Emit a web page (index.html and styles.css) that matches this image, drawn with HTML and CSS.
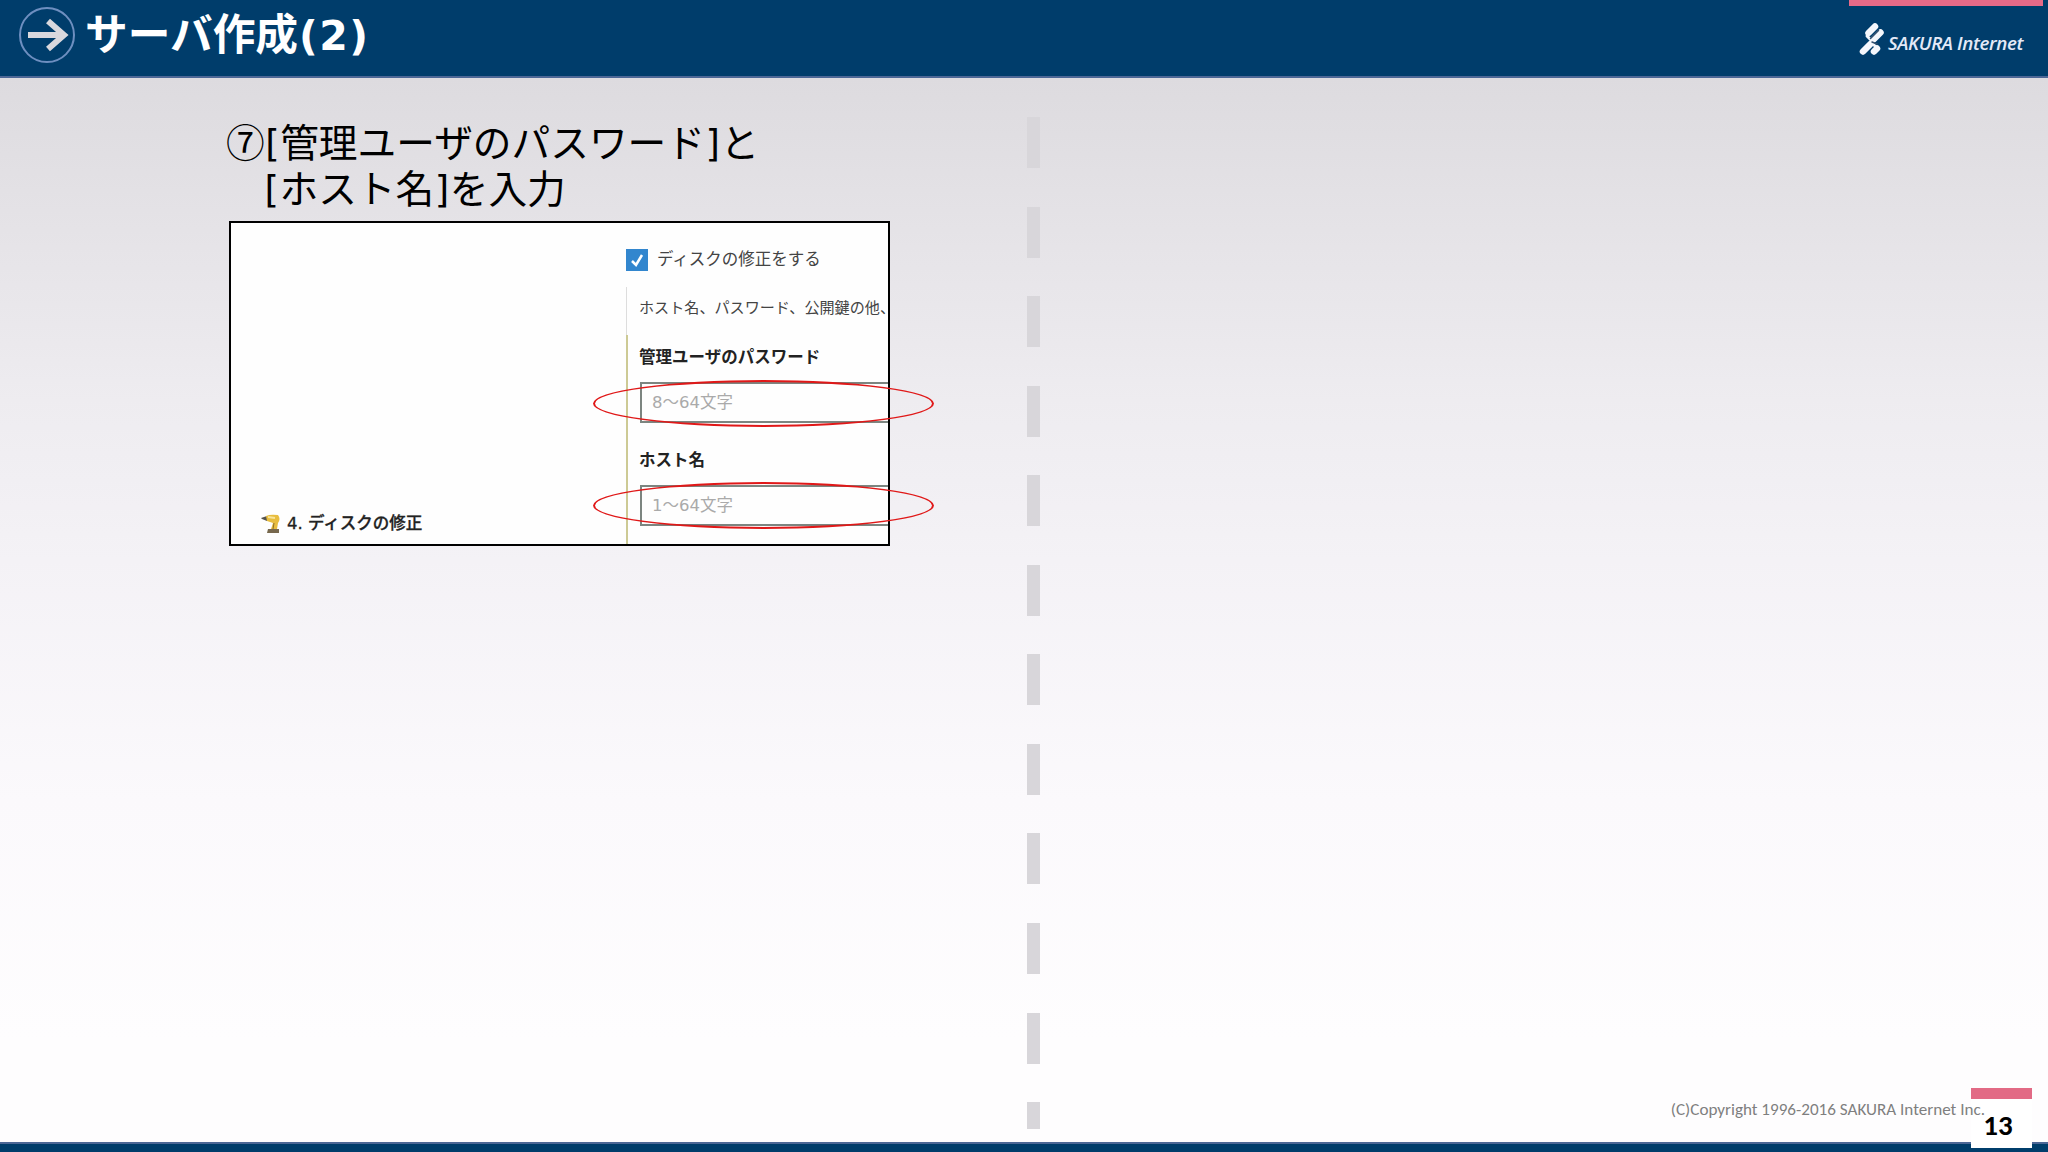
FILE: index.html
```html
<!DOCTYPE html>
<html lang="ja">

<head>
    <meta charset="UTF-8">
    <meta name="viewport" content="width=device-width, initial-scale=1.0">
    <title>サーバ作成(2)</title>
    <link rel="stylesheet" href="styles.css">
</head>

<body>
    <div class="slide">
        <header class="header">
            <svg class="icon-arrow" viewBox="0 0 58 58">
                <circle cx="29" cy="29" r="27" />
                <path d="M10 29H46M30 15L46 29L30 43" />
            </svg>
            <h1>サーバ作成<span class="num">(2)</span></h1>
            <div class="brand">
                <div class="brand-bar"></div>
                <div class="logo">
                    <svg class="logo-mark" viewBox="0 0 26 34">
                        <path class="leaf" d="M9.5 11L16 4.5M14.5 17.5L21.5 10.5M4 29.5L11.5 22M15 29.5L18 26.5" />
                        <path class="leaf-thin" d="M8 14L14 20M13 21L17 25" />
                        <path class="vein" d="M11.5 16.5L19.5 8.5M13 20L18 22" />
                    </svg>
                    <span class="logo-text">SAKURA Internet</span>
                </div>
            </div>
        </header>

        <main class="content">
            <section class="step">
                <h2>⑦<span class="bracket">[</span>管理ユーザのパスワード<span class="bracket">]</span>と<br>
                    <span class="indent"><span class="bracket">[</span>ホスト名<span class="bracket">]</span>を入力</span></h2>
                <div class="capture">
                    <div class="capture-side">
                        <svg class="icon-drill" viewBox="0 0 20 20">
                            <path d="M0 4L6 2V7L1 5Z" fill="#55534c" />
                            <path d="M5 2Q9 0 17 1Q20 5 17 9L16 15H10L12 9L6 7Z" fill="#e8bd3e" />
                            <path d="M7 3L14 4" stroke="#f8e49a" stroke-width="2" />
                            <path d="M7 15H18V19H6Z" fill="#77684d" />
                            <path d="M13 9L12 15" stroke="#8b6c2b" />
                        </svg>
                        <span>4. ディスクの修正</span>
                    </div>
                    <div class="capture-main">
                        <div class="check">
                            <svg class="checkbox" viewBox="0 0 22 22">
                                <rect width="22" height="22" />
                                <path d="M6 12L10 16L16 6" />
                            </svg>
                            <span>ディスクの修正をする</span>
                        </div>
                        <div class="fields">
                            <p class="note">ホスト名、パスワード、公開鍵の他、</p>
                            <div class="group">
                                <div class="label">管理ユーザのパスワード</div>
                                <div class="field">8～64文字</div>
                                <div class="label">ホスト名</div>
                                <div class="field">1～64文字</div>
                            </div>
                        </div>
                    </div>
                    <!-- 入力欄を囲む赤い丸 -->
                    <div class="mark mark-password"></div>
                    <div class="mark mark-host"></div>
                </div>
            </section>
            <div class="divider"></div>
            <section class="blank"></section>
        </main>

        <footer class="footer">
            <span class="copyright">(C)Copyright 1996-2016 SAKURA Internet Inc.</span>
            <div class="page">13</div>
        </footer>
    </div>
</body>

</html>
```
FILE: styles.css
```css
* {
    box-sizing: border-box;
}

body,
h1,
h2,
p {
    margin: 0;
}

body {
    font-family: "DejaVu Sans", "Noto Sans CJK JP", sans-serif;
    color: #000;
}

.slide {
    display: flex;
    flex-direction: column;
    width: 2048px;
    height: 1152px;
    overflow: hidden;
    background: linear-gradient(#dddbdf 78px, #e4e2e6 210px, #eeecf0 400px, #f4f2f6 560px, #fbf9fc 800px, #fefdfe 1040px);
}

/* ヘッダー */
.header {
    display: flex;
    flex: none;
    height: 78px;
    padding-left: 18px;
    background: #003d6b;
    border-bottom: 2px solid #4c6796;
}

.icon-arrow {
    width: 58px;
    height: 58px;
    margin-top: 6px;
    fill: none;
    stroke: #d9d8dd;
    stroke-width: 6;
}

.icon-arrow circle {
    stroke: #6e8fc0;
    stroke-width: 2;
}

h1 {
    margin-left: 9px;
    color: #fff;
    font-family: "Noto Sans CJK JP", sans-serif;
    font-size: 42.7px;
    font-weight: bold;
    line-height: 62px;
    white-space: nowrap;
}

.num {
    margin-left: 1px;
    font-family: "DejaVu Sans", sans-serif;
    font-size: 41px;
    letter-spacing: 1.5px;
}

.brand {
    width: 194px;
    margin-left: auto;
    margin-right: 5px;
}

.brand-bar {
    height: 6px;
    background: #e66a88;
}

.logo {
    display: flex;
    padding: 16px 0 0 10px;
}

.logo-mark {
    width: 26px;
    height: 34px;
    fill: none;
    stroke-linecap: round;
}

.leaf {
    stroke: #f5f7fc;
    stroke-width: 6.5;
}

.leaf-thin {
    stroke: #f5f7fc;
    stroke-width: 3;
}

.vein {
    stroke: #33506f;
    stroke-width: 1.5;
}

.logo-text {
    margin-left: 3px;
    color: #e4eaf8;
    font: italic 600 18.8px/43px "Open Sans", sans-serif;
    letter-spacing: -0.4px;
    white-space: nowrap;
}

/* 本文 */
.content {
    display: flex;
    flex: 1;
    min-height: 0;
}

.step {
    width: 1027px;
    padding: 39px 0 0 229px;
}

h2 {
    height: 104px;
    margin-left: -3px;
    font-family: "Noto Sans CJK JP", sans-serif;
    font-size: 38.7px;
    font-weight: normal;
    line-height: 46px;
    white-space: nowrap;
}

.bracket {
    display: inline-block;
    width: 15.5px;
    font-family: "DejaVu Sans", sans-serif;
    font-size: 37px;
    line-height: 1;
    text-align: center;
}

.indent {
    padding-left: 38px;
}

.divider {
    width: 13px;
    height: 1012px;
    margin-top: 39px;
    background: repeating-linear-gradient(#d8d6da 0 51px, transparent 51px 89.55px);
}

/* 画面キャプチャ */
.capture {
    position: relative;
    display: flex;
    width: 661px;
    height: 325px;
    border: 2px solid #000;
    background: #fefefe;
    color: #222;
    font-size: 16.5px;
    line-height: 24px;
    white-space: nowrap;
}

.capture-side {
    display: flex;
    align-items: center;
    align-self: flex-end;
    width: 395px;
    padding: 0 0 8px 30px;
    font-weight: 500;
    -webkit-text-stroke: 0.3px #222;
}

.icon-drill {
    width: 20px;
    height: 20px;
    margin-right: 6px;
}

.capture-main {
    flex: 1;
    overflow: hidden;
}

.check {
    display: flex;
    align-items: center;
    height: 64px;
    padding-top: 10px;
    color: #444;
}

.checkbox {
    width: 22px;
    height: 22px;
    margin-right: 9px;
    fill: #3286ce;
}

.checkbox path {
    fill: none;
    stroke: #fff;
    stroke-width: 2.5;
}

.note {
    height: 48px;
    padding: 9px 0 0 12px;
    border-left: 1px solid #ddd;
    color: #444;
    font-size: 15.1px;
}

.group {
    height: 209px;
    padding: 11px 0 0 11px;
    border-left: 2px solid #cdca95;
}

.label {
    font-weight: bold;
}

.field {
    height: 41px;
    margin: 12px -2px 26px 1px;
    padding-left: 10px;
    border: 2px solid #7c8580;
    color: #aaa;
    line-height: 37px;
}

.field:last-child {
    margin-bottom: 0;
}

.mark {
    position: absolute;
    left: 362px;
    width: 341px;
    height: 47px;
    border: 2px solid #e01818;
    border-radius: 50%;
}

.mark-password {
    top: 157px;
}

.mark-host {
    top: 259px;
}

/* フッター */
.footer {
    display: flex;
    flex: none;
    justify-content: flex-end;
    height: 64px;
    padding-right: 16px;
    background: linear-gradient(transparent 54px, #4c6796 54px 56px, #003d6b 56px);
}

.copyright {
    z-index: 1;
    margin-right: -14px;
    color: #7f7f7f;
    font: 17.1px/44px Carlito, "Open Sans", sans-serif;
    white-space: nowrap;
}

.page {
    width: 61px;
    height: 60px;
    padding-right: 7px;
    border-top: 11px solid #e26a85;
    background: #fff;
    font: bold 29px/53px Carlito, "Open Sans", sans-serif;
    text-align: center;
}
```
